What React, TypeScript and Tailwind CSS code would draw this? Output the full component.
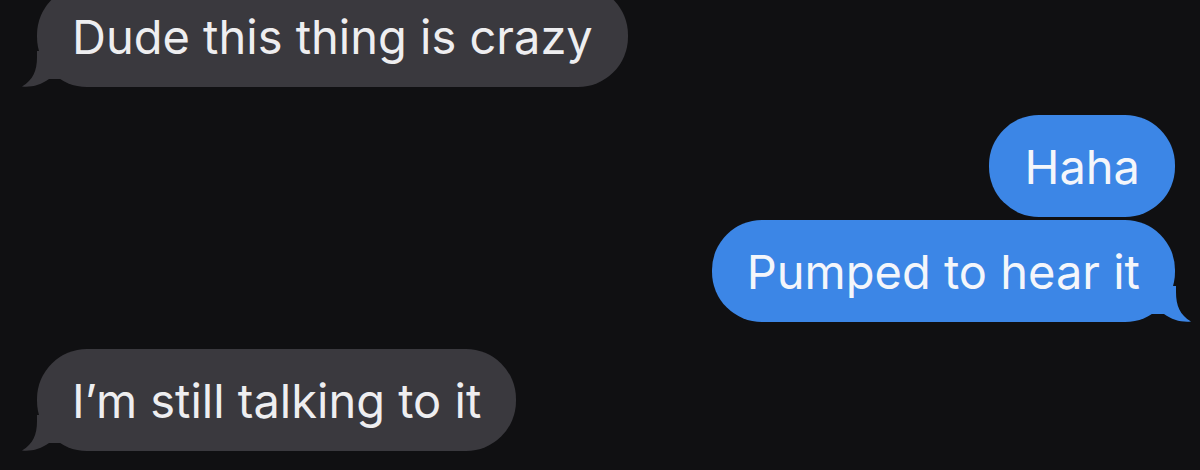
import React from "react";

type Msg = { id: number; text: string; mine: boolean; tail: boolean };

const messages: Msg[] = [
  { id: 1, text: "Dude this thing is crazy", mine: false, tail: true },
  { id: 2, text: "Haha", mine: true, tail: false },
  { id: 3, text: "Pumped to hear it", mine: true, tail: true },
  { id: 4, text: "I’m still talking to it", mine: false, tail: true },
];

function Tail({ mine }: { mine: boolean }) {
  // little hook under the bubble, mirrored for outgoing messages
  return (
    <svg
      viewBox="0 0 40 36"
      className={
        mine
          ? "absolute -right-[17px] bottom-0 w-[40px] h-[36px] -scale-x-100"
          : "absolute -left-[16px] bottom-0 w-[40px] h-[36px]"
      }
    >
      <path
        d="M16 0 L16 6 C16 20 12 29 1 35.5 C10 36.5 20 34 28 28 L40 28 L40 0 Z"
        fill={mine ? "#3c86e6" : "#3a393e"}
      />
    </svg>
  );
}

function Bubble({ msg }: { msg: Msg }) {
  return (
    <div className={msg.mine ? "flex justify-end" : "flex justify-start"}>
      <div
        className={[
          "relative h-[102px] flex items-center rounded-[50px] px-[35px] text-[47px] leading-none",
          msg.mine ? "bg-[#3c86e6] text-[#f4f6fb]" : "bg-[#3a393e] text-[#eeeef0]",
        ].join(" ")}
      >
        {msg.tail && <Tail mine={msg.mine} />}
        <span className="relative">{msg.text}</span>
      </div>
    </div>
  );
}

export default function App() {
  return (
    <div
      className="w-[1200px] h-[470px] overflow-hidden bg-[#101012] pl-[37px] pr-[25px]"
      style={{ fontFamily: "Inter, 'Liberation Sans', sans-serif" }}
    >
      <div className="flex flex-col -mt-[15px]">
        <Bubble msg={messages[0]} />
        <div className="mt-[28px]">
          <Bubble msg={messages[1]} />
        </div>
        <div className="mt-[3px]">
          <Bubble msg={messages[2]} />
        </div>
        <div className="mt-[27px]">
          <Bubble msg={messages[3]} />
        </div>
      </div>
    </div>
  );
}
